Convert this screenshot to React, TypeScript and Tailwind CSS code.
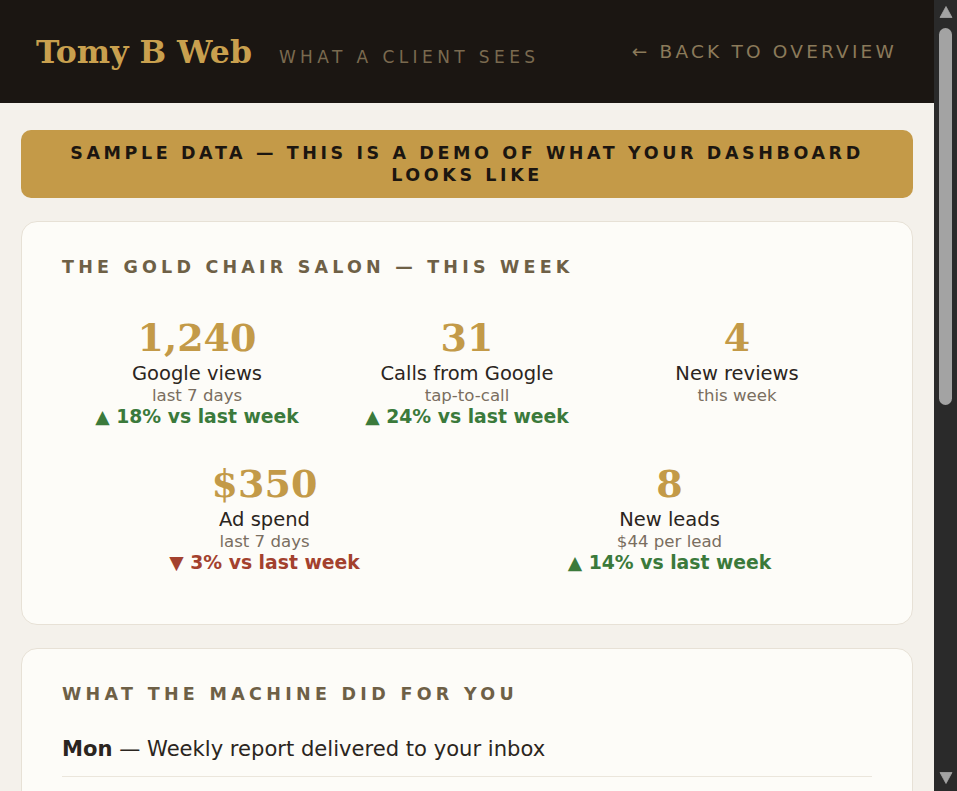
import React from "react";

const sans = "font-['DejaVu_Sans',sans-serif]";
const serif = "font-['DejaVu_Serif',serif]";

type Stat = {
  value: string;
  label: string;
  sub: string;
  change?: { dir: "up" | "down"; text: string };
};

const row1: Stat[] = [
  { value: "1,240", label: "Google views", sub: "last 7 days", change: { dir: "up", text: "18% vs last week" } },
  { value: "31", label: "Calls from Google", sub: "tap-to-call", change: { dir: "up", text: "24% vs last week" } },
  { value: "4", label: "New reviews", sub: "this week" },
];

const row2: Stat[] = [
  { value: "$350", label: "Ad spend", sub: "last 7 days", change: { dir: "down", text: "3% vs last week" } },
  { value: "8", label: "New leads", sub: "$44 per lead", change: { dir: "up", text: "14% vs last week" } },
];

const activity = [
  { day: "Mon", text: "Weekly report delivered to your inbox" },
  { day: "Tue", text: "Replied to 3 new Google reviews" },
  { day: "Wed", text: "Posted a fresh photo update to your Google profile" },
  { day: "Thu", text: "Followed up with 2 leads by text" },
];

function StatBlock({ s }: { s: Stat }) {
  return (
    <div className="flex flex-col items-center text-center">
      <div className={`${serif} text-[38px] leading-[44px] font-bold text-[#c39a48]`}>{s.value}</div>
      <div className="mt-[2px] text-[19.5px] leading-[24px] text-[#2b2520]">{s.label}</div>
      <div className="text-[16.6px] leading-[20px] text-[#7a6e60]">{s.sub}</div>
      {s.change ? (
        <div
          className={
            s.change.dir === "up"
              ? "text-[18.8px] leading-[22px] font-bold text-[#3b7a3b]"
              : "text-[18.8px] leading-[22px] font-bold text-[#a3412e]"
          }
        >
          {s.change.dir === "up" ? "▲" : "▼"} {s.change.text}
        </div>
      ) : null}
    </div>
  );
}

function Scrollbar() {
  return (
    <div className="flex w-[23px] shrink-0 flex-col items-center bg-[#2a2a2a]">
      <svg width="14" height="22" viewBox="0 0 14 22" className="shrink-0">
        <path d="M1 17.5L7 6.5L13 17.5Z" fill="#a3a3a3" strokeLinejoin="round" stroke="#a3a3a3" strokeWidth="0.8" />
      </svg>
      <div className="mt-[6px] h-[377px] w-[13px] rounded-full bg-[#a3a3a3]" />
      <div className="flex-1" />
      <svg width="14" height="22" viewBox="0 0 14 22" className="shrink-0">
        <path d="M1 3.5L7 14.5L13 3.5Z" fill="#a3a3a3" strokeLinejoin="round" stroke="#a3a3a3" strokeWidth="0.8" />
      </svg>
    </div>
  );
}

export default function App() {
  return (
    <div className={`${sans} flex h-screen overflow-hidden bg-[#f4f1eb]`}>
      <div className="min-w-0 flex-1 overflow-hidden">
        {/* Header */}
        <header className="flex h-[103px] items-center justify-between bg-[#1b1612] pl-9 pr-[37px]">
          <div className="flex items-baseline gap-[27px]">
            <span className={`${serif} text-[31.5px] font-bold text-[#c9a04e]`}>Tomy B Web</span>
            <span className="text-[17px] tracking-[4.4px] text-[#7a6a4f]">WHAT A CLIENT SEES</span>
          </div>
          <a className="text-[18.5px] tracking-[3.2px] text-[#8b7a5a]">← BACK TO OVERVIEW</a>
        </header>

        <main className="flex flex-col gap-[23px] px-[21px] pt-[27px] pb-[40px]">
          {/* Banner */}
          <div className="rounded-[10px] bg-[#c49a48] px-6 py-3 text-center text-[17.5px] font-bold leading-[22px] tracking-[3.6px] text-[#1c1610]">
            SAMPLE DATA — THIS IS A DEMO OF WHAT YOUR DASHBOARD LOOKS LIKE
          </div>

          {/* Stats card */}
          <section className="rounded-[16px] border border-[#e7e1d6] bg-[#fdfcf8] px-10 pt-[33px] pb-[50px]">
            <h2 className="text-[17.5px] font-bold leading-[24px] tracking-[4.2px] text-[#6e6046]">
              THE GOLD CHAIR SALON — THIS WEEK
            </h2>
            <div className="mt-[37px] flex flex-col gap-[34px]">
              <div className="grid grid-cols-3">
                {row1.map((s) => (
                  <StatBlock key={s.label} s={s} />
                ))}
              </div>
              <div className="grid grid-cols-2">
                {row2.map((s) => (
                  <StatBlock key={s.label} s={s} />
                ))}
              </div>
            </div>
          </section>

          {/* Activity card */}
          <section className="rounded-[16px] border border-[#e7e1d6] bg-[#fdfcf8] px-10 pt-[33px] pb-[30px]">
            <h2 className="text-[17.5px] font-bold leading-[24px] tracking-[4.3px] text-[#6e6046]">
              WHAT THE MACHINE DID FOR YOU
            </h2>
            <ul className="mt-[16px] flex flex-col">
              {activity.map((a) => (
                <li
                  key={a.day}
                  className="border-b border-[#ebe6dc] py-[12px] text-[21.1px] leading-[30px] text-[#2b2520]"
                >
                  <span className="font-bold">{a.day}</span> — {a.text}
                </li>
              ))}
            </ul>
          </section>
        </main>
      </div>
      <Scrollbar />
    </div>
  );
}
